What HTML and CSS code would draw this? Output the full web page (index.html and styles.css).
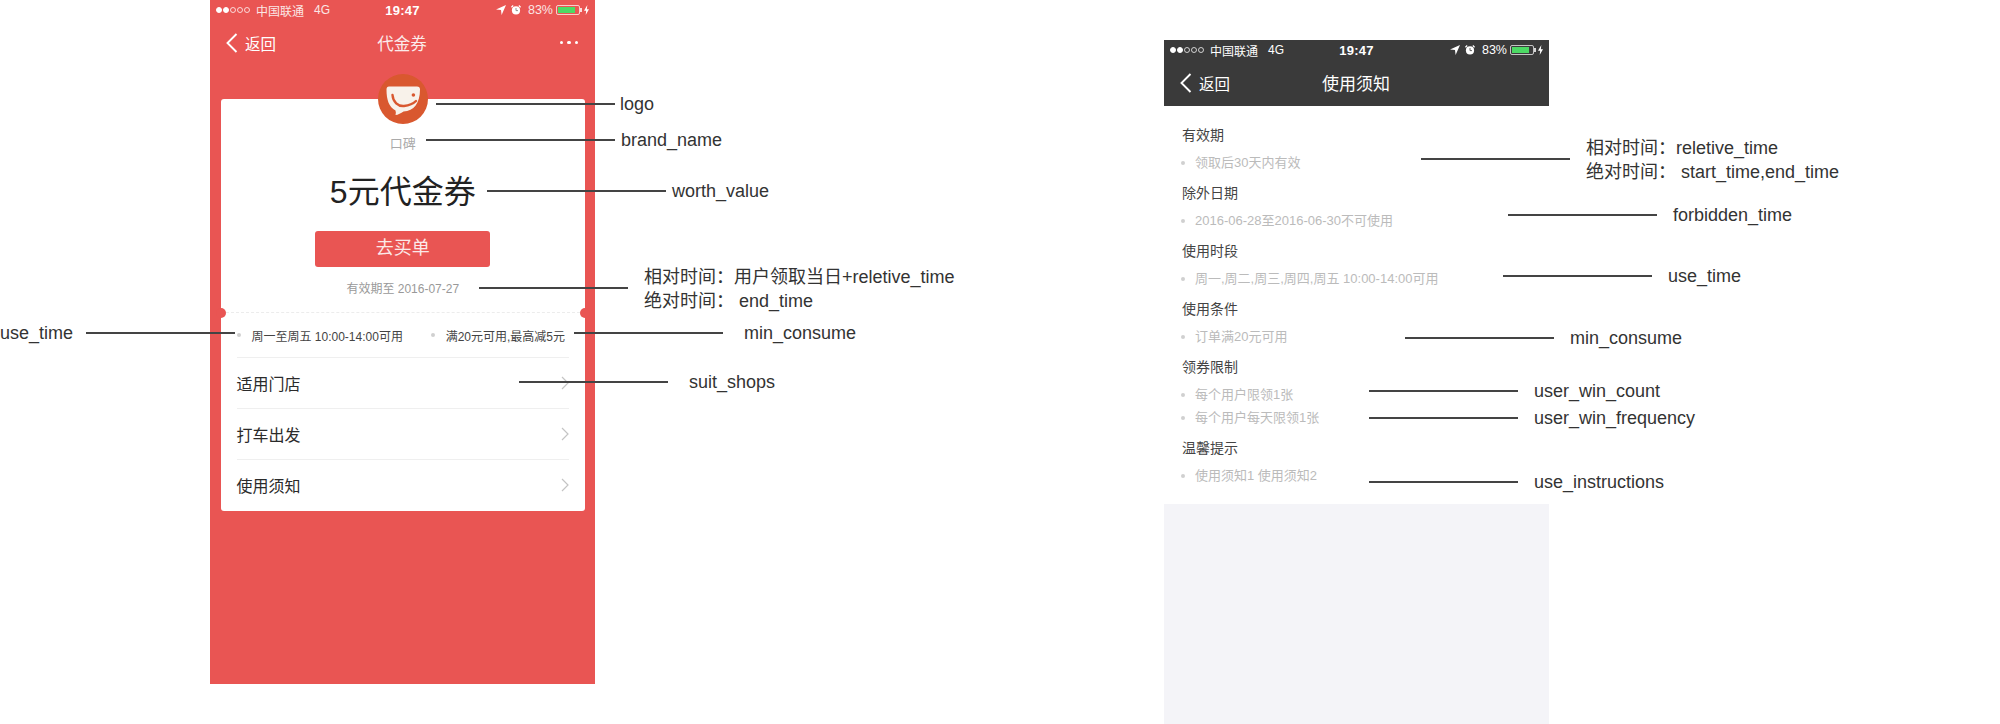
FILE: index.html
```html
<!DOCTYPE html>
<html lang="zh-CN">
<head>
<meta charset="utf-8">
<title>代金券</title>
<link rel="stylesheet" href="styles.css">
</head>
<body>
<main class="canvas">
  <section class="phone phone-voucher">
    <div class="top-red">
      <div class="status">
        <div class="carrier">
          <span class="signal"><i class="on"></i><i class="on"></i><i></i><i></i><i></i></span>
          <span class="carrier-name">中国联通</span><span class="net">4G</span>
        </div>
        <div class="clock">19:47</div>
        <div class="sys">
          <svg class="ic-loc" viewBox="0 0 10 10"><path d="M10 0 L0 4.6 L5 5 L5.6 10 Z" fill="#fff"/></svg>
          <svg class="ic-alarm" viewBox="0 0 10 10"><circle cx="5" cy="5.4" r="4.1" fill="#fff"/><path d="M5 3 V5.6 H7" stroke="#888" stroke-width=".9" fill="none"/><path d="M.4 2.2 L2.2 .5 M9.6 2.2 L7.8 .5" stroke="#fff" stroke-width="1.2"/></svg>
          <span class="pct">83%</span>
          <span class="battery"><span class="battery-fill"></span></span>
          <svg class="ic-bolt" viewBox="0 0 6 12"><path d="M4 0 L0 7 H2.6 L2 12 L6 5 H3.4 Z" fill="#fff"/></svg>
        </div>
      </div>
      <div class="nav">
        <div class="back">
          <svg class="ic-back" viewBox="0 0 12 20"><path d="M10.5 1 L1.5 10 L10.5 19" fill="none" stroke="#fff" stroke-width="1.9"/></svg>
          <span>返回</span>
        </div>
        <div class="nav-title">代金券</div>
        <div class="more"><i></i><i></i><i></i></div>
      </div>
    </div>
    <div class="card">
      <svg class="logo" viewBox="0 0 50 50">
        <circle cx="25" cy="25" r="25" fill="#d9582f"/>
        <path d="M11 12.5 H39 Q42 12.5 42 15.5 C42 29 36 37 25.5 37.5 C23 39 20 41 17.5 41 C18 39.5 18 38 17.5 36.5 C11 33 8.5 26 8.5 15.5 Q8.5 12.5 11 12.5 Z" fill="#f8f2ea"/>
        <path d="M14.5 21 C15 28 20 32.5 26 32 C31 31.5 35 30 38 27" fill="none" stroke="#d9582f" stroke-width="2.4" stroke-linecap="round"/>
        <circle cx="35.4" cy="21" r="1.8" fill="#d9582f"/>
      </svg>
      <div class="brand">口碑</div>
      <div class="worth">5元代金券</div>
      <div class="buy">去买单</div>
      <div class="validity">有效期至 2016-07-27</div>
      <div class="ticket-line"></div>
      <div class="perks">
        <span class="perk"><i class="bullet"></i>周一至周五 10:00-14:00可用</span>
        <span class="perk"><i class="bullet"></i>满20元可用,最高减5元</span>
      </div>
      <div class="row">适用门店<svg class="ic-next" viewBox="0 0 8 14"><path d="M1 1 L7 7 L1 13" fill="none" stroke="#c4c4c4" stroke-width="1.2"/></svg></div>
      <div class="row">打车出发<svg class="ic-next" viewBox="0 0 8 14"><path d="M1 1 L7 7 L1 13" fill="none" stroke="#c4c4c4" stroke-width="1.2"/></svg></div>
      <div class="row">使用须知<svg class="ic-next" viewBox="0 0 8 14"><path d="M1 1 L7 7 L1 13" fill="none" stroke="#c4c4c4" stroke-width="1.2"/></svg></div>
    </div>
  </section>

  <section class="phone phone-notice">
    <div class="top-dark">
      <div class="status">
        <div class="carrier">
          <span class="signal"><i class="on"></i><i class="on"></i><i></i><i></i><i></i></span>
          <span class="carrier-name">中国联通</span><span class="net">4G</span>
        </div>
        <div class="clock">19:47</div>
        <div class="sys">
          <svg class="ic-loc" viewBox="0 0 10 10"><path d="M10 0 L0 4.6 L5 5 L5.6 10 Z" fill="#fff"/></svg>
          <svg class="ic-alarm" viewBox="0 0 10 10"><circle cx="5" cy="5.4" r="4.1" fill="#fff"/><path d="M5 3 V5.6 H7" stroke="#555" stroke-width=".9" fill="none"/><path d="M.4 2.2 L2.2 .5 M9.6 2.2 L7.8 .5" stroke="#fff" stroke-width="1.2"/></svg>
          <span class="pct">83%</span>
          <span class="battery"><span class="battery-fill"></span></span>
          <svg class="ic-bolt" viewBox="0 0 6 12"><path d="M4 0 L0 7 H2.6 L2 12 L6 5 H3.4 Z" fill="#fff"/></svg>
        </div>
      </div>
      <div class="nav">
        <div class="back">
          <svg class="ic-back" viewBox="0 0 12 20"><path d="M10.5 1 L1.5 10 L10.5 19" fill="none" stroke="#fff" stroke-width="1.9"/></svg>
          <span>返回</span>
        </div>
        <div class="nav-title">使用须知</div>
        <div class="more-empty"></div>
      </div>
    </div>
    <div class="terms">
      <div class="term"><h3>有效期</h3><p><i class="bullet"></i>领取后30天内有效</p></div>
      <div class="term"><h3>除外日期</h3><p><i class="bullet"></i>2016-06-28至2016-06-30不可使用</p></div>
      <div class="term"><h3>使用时段</h3><p><i class="bullet"></i>周一,周二,周三,周四,周五 10:00-14:00可用</p></div>
      <div class="term"><h3>使用条件</h3><p><i class="bullet"></i>订单满20元可用</p></div>
      <div class="term"><h3>领券限制</h3><p><i class="bullet"></i>每个用户限领1张</p><p><i class="bullet"></i>每个用户每天限领1张</p></div>
      <div class="term"><h3>温馨提示</h3><p><i class="bullet"></i>使用须知1 使用须知2</p></div>
    </div>
    <div class="blank"></div>
  </section>

  <div class="note n-logo"><i class="line"></i><span>logo</span></div>
  <div class="note n-brand"><i class="line"></i><span>brand_name</span></div>
  <div class="note n-worth"><i class="line"></i><span>worth_value</span></div>
  <div class="note n-end"><i class="line"></i><span class="two"><span>相对时间<b>：</b>用户领取当日+reletive_time</span><span>绝对时间<b>：</b> end_time</span></span></div>
  <div class="note n-usetime1"><span>use_time</span><i class="line"></i></div>
  <div class="note n-min1"><i class="line"></i><span>min_consume</span></div>
  <div class="note n-shops"><i class="line"></i><span>suit_shops</span></div>
  <div class="note n-rel"><i class="line"></i><span class="two"><span>相对时间<b>：</b>reletive_time</span><span>绝对时间<b>：</b> start_time,end_time</span></span></div>
  <div class="note n-forbid"><i class="line"></i><span>forbidden_time</span></div>
  <div class="note n-usetime2"><i class="line"></i><span>use_time</span></div>
  <div class="note n-min2"><i class="line"></i><span>min_consume</span></div>
  <div class="note n-count"><i class="line"></i><span>user_win_count</span></div>
  <div class="note n-freq"><i class="line"></i><span>user_win_frequency</span></div>
  <div class="note n-instr"><i class="line"></i><span>use_instructions</span></div>
</main>
</body>
</html>
```

FILE: styles.css
```css
* { box-sizing: border-box; }
html, body { margin: 0; padding: 0; background: #fff; }
body { font-family: "Liberation Sans", "Noto Sans CJK SC", sans-serif; color: #333; }

.canvas {
  position: relative;
  width: 2000px;
  height: 724px;
  overflow: hidden;
  display: flex;
  align-items: flex-start;
  gap: 569px;
  padding-left: 210px;
}

.phone { width: 385px; flex: none; display: flex; flex-direction: column; }
.phone-voucher { height: 684px; background: #e95553; padding-bottom: 172px; }
.phone-notice { margin-top: 40px; height: 684px; background: #fff; }

.top-dark { background: #3a3a3a; }

/* status bar */
.status {
  height: 20px;
  padding: 0 6px;
  display: grid;
  grid-template-columns: 1fr auto 1fr;
  align-items: center;
  color: #fff;
  font-size: 12px;
}
.top-red .status { color: #fbe6e5; }
.carrier, .sys { display: flex; align-items: center; }
.signal { display: flex; gap: 1px; width: 40px; }
.signal i { width: 6px; height: 6px; border-radius: 50%; border: 1px solid rgba(255,255,255,.75); }
.signal i.on { background: #fff; border-color: #fff; }
.carrier-name { font-size: 12px; }
.net { margin-left: 10px; font-size: 12px; }
.clock { font-size: 13px; font-weight: 700; letter-spacing: .3px; color: #fff; }
.sys { justify-content: flex-end; padding-right: 0; }
.ic-loc { width: 10px; height: 10px; }
.ic-alarm { width: 10px; height: 10px; margin-left: 5px; }
.pct { margin-left: 7px; font-size: 12.5px; }
.battery {
  margin-left: 3px;
  width: 24px;
  height: 10px;
  border: 1px solid rgba(255,255,255,.7);
  border-radius: 2px;
  padding: 1px;
  display: flex;
  position: relative;
}
.battery::after {
  content: "";
  position: absolute;
  right: -3px;
  top: 2px;
  width: 2px;
  height: 4px;
  background: rgba(255,255,255,.8);
}
.battery-fill { width: 83%; background: #4cd964; }
.ic-bolt { width: 5px; height: 10px; margin-left: 4px; }

/* nav bar */
.nav {
  height: 45.5px;
  padding: 0 17px 0 16px;
  display: grid;
  grid-template-columns: 1fr auto 1fr;
  align-items: center;
  color: #fff;
}
.top-red .nav { height: 45px; }
.back { display: flex; align-items: center; gap: 7px; font-size: 15.5px; }
.ic-back { width: 12px; height: 20px; }
.nav-title { font-size: 17px; }
.top-red .nav-title { font-size: 16.5px; color: #fbeaea; }
.more { display: flex; gap: 4px; justify-content: flex-end; }
.more i { width: 3.5px; height: 3.5px; border-radius: 50%; background: #fff; }

/* voucher card */
.card {
  position: relative;
  margin: 34px 10px 0 10.5px;
  height: 412px;
  background: #fff;
  border-radius: 3px;
  padding-top: 35px;
  display: flex;
  flex-direction: column;
  align-items: center;
}
.logo { position: absolute; left: 157px; top: -25px; width: 50px; height: 50px; }
.brand { line-height: 20px; font-size: 13px; color: #aaa; }
.worth { margin-top: 16px; line-height: 44px; font-size: 32px; color: #222; }
.buy {
  margin-top: 17px;
  width: 175px;
  height: 35.5px;
  line-height: 35.5px;
  text-align: center;
  background: #e95553;
  border-radius: 3px;
  font-size: 18px;
  color: #fbe9e8;
}
.validity { margin-top: 12.5px; line-height: 20px; font-size: 12px; color: #999; }
.ticket-line {
  position: relative;
  margin-top: 13px;
  align-self: stretch;
  border-top: 1px dashed #ececec;
  margin-left: 5px;
  margin-right: 5px;
}
.ticket-line::before, .ticket-line::after {
  content: "";
  position: absolute;
  top: -5.5px;
  width: 10px;
  height: 10px;
  border-radius: 50%;
  background: #e95553;
}
.ticket-line::before { left: -10px; }
.ticket-line::after { right: -10px; }

.perks {
  align-self: stretch;
  height: 44px;
  padding: 0 20px 0 16px;
  display: flex;
  justify-content: space-between;
  align-items: center;
  font-size: 12px;
  color: #444;
}
.perk { display: flex; align-items: center; }
.bullet { width: 4px; height: 4px; border-radius: 50%; background: #d0d0d0; flex: none; }
.perk .bullet { margin-right: 11px; }

.row {
  align-self: stretch;
  margin: 0 16px;
  height: 51px;
  border-top: 1px solid #efefef;
  display: flex;
  align-items: center;
  justify-content: space-between;
  font-size: 16px;
  color: #2b2b2b;
}
.ic-next { width: 8px; height: 14px; }

/* notice terms */
.terms { height: 398.5px; padding: 19.5px 18px 0; display: flex; flex-direction: column; gap: 10px; }
.term h3 { margin: 0 0 8px; font-size: 14px; line-height: 20px; font-weight: 400; color: #444; }
.term p {
  margin: 0;
  height: 20px;
  line-height: 20px;
  display: flex;
  align-items: center;
  font-size: 13px;
  color: #bbb;
}
.term p + p { margin-top: 3px; }
.term .bullet { margin-right: 10px; margin-left: -1px; }
.blank { flex: 1; background: #f4f4f8; }

/* annotations over the diagram */
.note {
  position: absolute;
  display: flex;
  align-items: center;
  gap: 16px;
  height: 24px;
  font-size: 18px;
  line-height: 22px;
  color: #333;
  white-space: nowrap;
}
.line { display: block; width: 149px; height: 1.5px; background: #444; flex: none; }
.two { display: flex; flex-direction: column; }
.two b { font-family: "Noto Sans CJK TC", sans-serif; font-weight: 400; }

.n-logo { left: 436px; top: 92px; gap: 5px; }
.n-logo .line { width: 179px; }
.n-brand { left: 426px; top: 128px; gap: 6px; }
.n-brand .line { width: 189px; }
.n-worth { left: 487px; top: 179px; gap: 6px; }
.n-worth .line { width: 179px; }
.n-end { left: 479px; top: 276px; }
.n-usetime1 { left: 0; top: 321px; gap: 13px; }
.n-min1 { left: 574px; top: 321px; gap: 21px; }
.n-shops { left: 519px; top: 370px; gap: 21px; }
.n-rel { left: 1421px; top: 147px; }
.n-forbid { left: 1508px; top: 203px; }
.n-usetime2 { left: 1503px; top: 264px; }
.n-min2 { left: 1405px; top: 326px; }
.n-count { left: 1369px; top: 379px; }
.n-freq { left: 1369px; top: 406px; }
.n-instr { left: 1369px; top: 470px; }
```
